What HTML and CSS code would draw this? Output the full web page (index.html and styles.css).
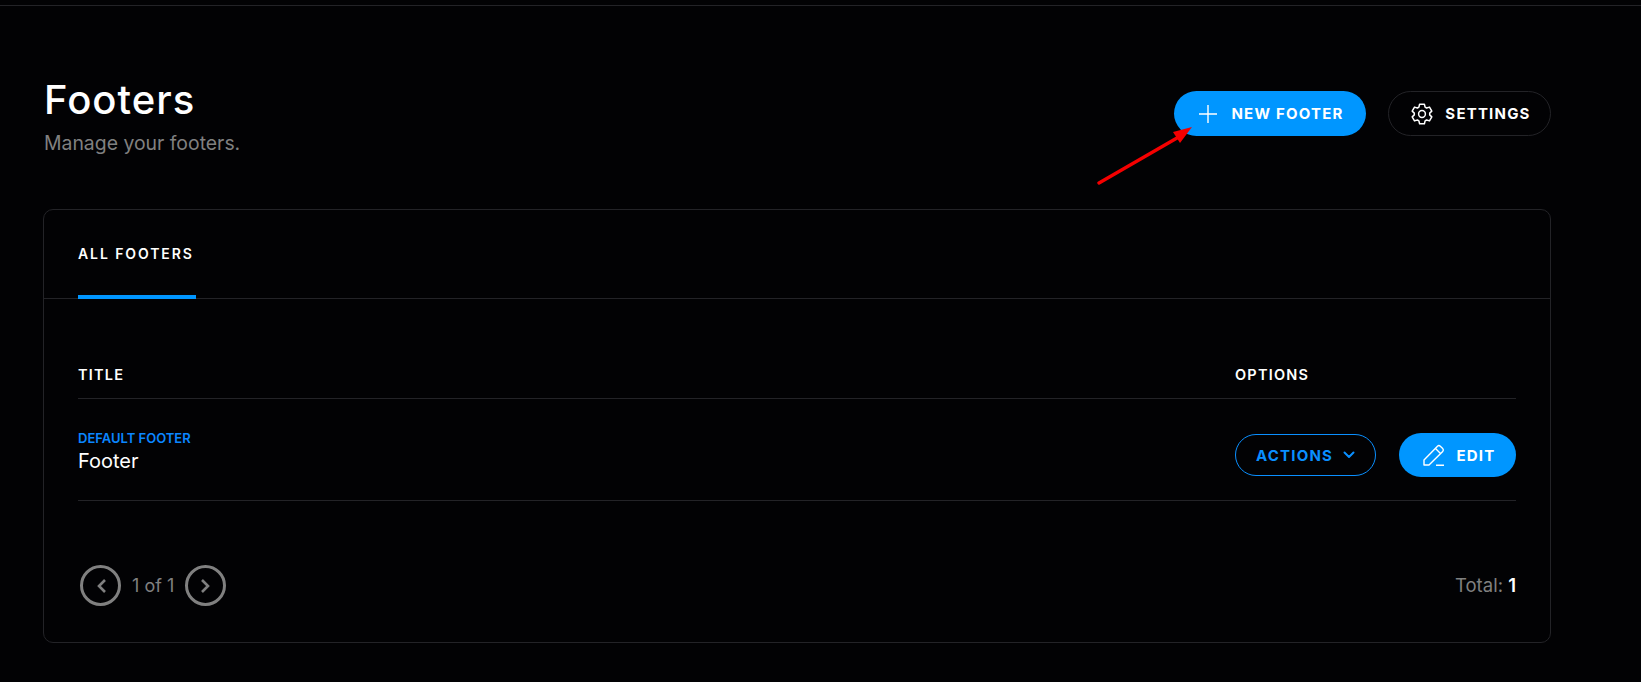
FILE: index.html
```html
<!DOCTYPE html>
<html lang="en">
<head>
<meta charset="utf-8">
<title>Footers</title>
<link rel="stylesheet" href="styles.css">
</head>
<body>
<div class="topline"></div>
<main class="page">
  <header class="head">
    <div class="head-text">
      <h1 class="title">Footers</h1>
      <p class="subtitle">Manage your footers.</p>
    </div>
    <div class="head-actions">
      <a class="btn btn-primary btn-new">
        <svg class="ico-plus" width="20" height="20" viewBox="0 0 20 20" fill="none" stroke="#fff" stroke-width="1.4"><path d="M10 1v18M1 10h18"/></svg>
        <span>NEW FOOTER</span>
      </a>
      <a class="btn btn-ghost">
        <svg width="24" height="24" viewBox="0 0 24 24" fill="none" stroke="#fff" stroke-width="1.5" stroke-linejoin="round"><path d="M9.6 2.2h4.8l.7 2.9 1.5.9 2.9-.9 2.3 4-2.1 2 0 1.8 2.1 2-2.3 4-2.9-.9-1.5.9-.7 2.9H9.6l-.7-2.9-1.5-.9-2.9.9-2.3-4 2.1-2v-1.8l-2.1-2 2.3-4 2.9.9 1.5-.9z"/><circle cx="12" cy="12" r="3.4"/></svg>
        <span>SETTINGS</span>
      </a>
    </div>
  </header>

  <section class="card">
    <nav class="tabs">
      <a class="tab">ALL FOOTERS</a>
    </nav>
    <div class="card-body">
      <div class="row row-head">
        <div class="col-title">TITLE</div>
        <div class="col-options">OPTIONS</div>
      </div>
      <div class="row row-item">
        <div class="col-title">
          <div class="tag">DEFAULT FOOTER</div>
          <div class="name">Footer</div>
        </div>
        <div class="col-options options-btns">
          <a class="btn btn-outline">
            <span>ACTIONS</span>
            <svg width="12" height="8" viewBox="0 0 12 8" fill="none" stroke="#0a8fff" stroke-width="2" stroke-linecap="round" stroke-linejoin="round"><path d="M1.5 1.5 6 6l4.5-4.5"/></svg>
          </a>
          <a class="btn btn-primary btn-edit">
            <svg width="24" height="24" viewBox="0 0 24 24" fill="none" stroke="#fff" stroke-width="1.4" stroke-linejoin="round"><path d="M2 22v-5L15.5 3.2a2 2 0 0 1 2.8 0l2.4 2.4a2 2 0 0 1 0 2.8L7 22zM13.5 5.5l5 5M14 22.3h8"/></svg>
            <span>EDIT</span>
          </a>
        </div>
      </div>
      <div class="pager-row">
        <div class="pager">
          <span class="circle"><svg width="12" height="16" viewBox="0 0 12 16" fill="none" stroke="#808080" stroke-width="2.6"><path d="M10 2 4 8l6 6"/></svg></span>
          <span class="pager-text">1 of 1</span>
          <span class="circle"><svg width="12" height="16" viewBox="0 0 12 16" fill="none" stroke="#808080" stroke-width="2.6"><path d="M2 2l6 6-6 6"/></svg></span>
        </div>
        <div class="total">Total: <b>1</b></div>
      </div>
    </div>
  </section>
</main>
<svg class="arrow" width="100" height="70" viewBox="0 0 100 70" fill="none"><path d="M2 56 L80 11" stroke="#f50000" stroke-width="3.4" stroke-linecap="round"/><path d="M95 0 L76 5 L83 16 Z" fill="#f50000"/></svg>
</body>
</html>
```
FILE: styles.css
```css
* { box-sizing: border-box; }
html, body { margin: 0; height: 100%; }
body {
  background: #020204;
  color: #fff;
  font-family: "Inter", "Liberation Sans", sans-serif;
  overflow: hidden;
  position: relative;
}
.topline { height: 6px; border-bottom: 1px solid #232327; }
.page { width: 1508px; margin-left: 43px; padding-top: 71px; }
.head { display: flex; justify-content: space-between; align-items: flex-start; height: 132px; }
.title { margin: 0 0 0 1px; font-size: 40px; line-height: 46px; font-weight: 500; letter-spacing: 1px; }
.subtitle { margin: 8px 0 0 1px; font-size: 19.4px; line-height: 24px; color: #808080; font-weight: 400; }
.head-actions { display: flex; gap: 22px; margin-top: 14px; }
.btn {
  display: flex; align-items: center; justify-content: center;
  border-radius: 999px; font-weight: 700; font-size: 15px; letter-spacing: 1.2px;
}
.btn-primary { background: #0096ff; color: #fff; }
.btn-new { width: 192px; height: 45px; gap: 13px; padding-left: 2px; }
.btn-ghost { width: 163px; height: 45px; gap: 11px; padding-left: 2px; border: 1px solid #232327; }
.card { height: 434px; border: 1px solid #232327; border-radius: 10px; }
.tabs { height: 89px; border-bottom: 1px solid #232327; padding-left: 34px; display: flex; }
.tab {
  height: 89px; width: 118px; font-size: 14px; font-weight: 600; letter-spacing: 1.9px;
  padding-top: 36px; line-height: 16px; border-bottom: 4px solid #0096ff; white-space: nowrap;
}
.card-body { padding: 0 34px 0 34px; }
.row { display: flex; justify-content: space-between; border-bottom: 1px solid #232327; }
.col-options { width: 281px; }
.row-head { height: 100px; padding-top: 67px; font-size: 14.5px; line-height: 18px; font-weight: 600; letter-spacing: 1.2px; }
.row-item { height: 102px; align-items: flex-start; padding-top: 32px; }
.tag { font-size: 13px; line-height: 15px; font-weight: 600; color: #0a86ff; }
.name { font-size: 20px; line-height: 24px; font-weight: 400; margin-top: 3px; }
.options-btns { display: flex; align-items: center; justify-content: space-between; margin-top: 2px; }
.btn-outline { width: 141px; height: 42px; gap: 10px; border: 1px solid #0a8fff; color: #0a8fff; }
.btn-edit { width: 117px; height: 44px; gap: 11px; padding-left: 2px; }
.pager-row { display: flex; justify-content: space-between; align-items: center; margin-top: 64px; margin-left: 2px; }
.pager { display: flex; align-items: center; gap: 11px; }
.circle {
  width: 41px; height: 41px; border-radius: 50%; border: 3px solid #808080;
  display: flex; align-items: center; justify-content: center;
}
.pager-text, .total { font-size: 18px; line-height: 24px; color: #808080; font-weight: 400; }
.total { font-size: 18.5px; margin-top: -1px; }
.total b { color: #fff; font-weight: 600; }
.arrow { position: absolute; left: 1097px; top: 127px; }
```
